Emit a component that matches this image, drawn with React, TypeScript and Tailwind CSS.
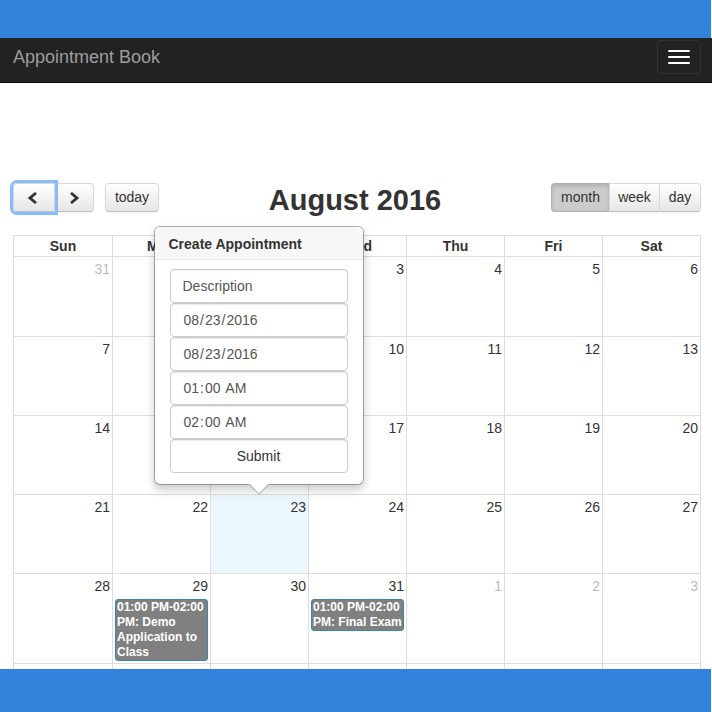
import React from "react";

type Day = { n: number; other?: boolean; event?: string; popover?: boolean };

const dayNames = ["Sun", "Mon", "Tue", "Wed", "Thu", "Fri", "Sat"];

const weeks: Day[][] = [
  [{ n: 31, other: true }, { n: 1 }, { n: 2 }, { n: 3 }, { n: 4 }, { n: 5 }, { n: 6 }],
  [7, 8, 9, 10, 11, 12, 13].map((n) => ({ n })),
  [14, 15, 16, 17, 18, 19, 20].map((n) => ({ n })),
  [{ n: 21 }, { n: 22 }, { n: 23, popover: true }, { n: 24 }, { n: 25 }, { n: 26 }, { n: 27 }],
  [
    { n: 28 },
    { n: 29, event: "01:00 PM-02:00 PM: Demo Application to Class" },
    { n: 30 },
    { n: 31, event: "01:00 PM-02:00 PM: Final Exam" },
    { n: 1, other: true },
    { n: 2, other: true },
    { n: 3, other: true },
  ],
];

const fields = [
  { label: "Start date", type: "date", value: "2016-08-23" },
  { label: "End date", type: "date", value: "2016-08-23" },
  { label: "Start time", type: "time", value: "01:00" },
  { label: "End time", type: "time", value: "02:00" },
];

const control =
  "block h-[34px] w-full rounded-[4px] border border-[#cccccc] bg-white text-[14px] shadow-[inset_0_1px_1px_rgba(0,0,0,0.075)]";

const toolButton =
  "flex h-[29px] items-center justify-center border border-[#d8d8d8] border-b-[#bfbfbf] bg-linear-to-b from-white to-[#e6e6e6] text-[14px] shadow-[0_1px_2px_rgba(0,0,0,0.05)]";

function CreatePopover() {
  return (
    <div
      role="dialog"
      aria-label="Create Appointment"
      className="absolute bottom-full left-1/2 z-10 mb-[10px] -ml-[106px] w-[210px] rounded-[6px] border border-black/30 bg-white bg-clip-padding text-left shadow-[0_5px_10px_rgba(0,0,0,0.2)]"
    >
      <h3 className="h-[33px] rounded-t-[5px] border-b border-[#ebebeb] bg-[#f7f7f7] px-[14px] text-[14px] leading-[35px] font-bold">
        Create Appointment
      </h3>
      <form className="px-[15px] pt-[9px] pb-[11px]" onSubmit={(e) => e.preventDefault()}>
        <input
          type="text"
          aria-label="Description"
          placeholder="Description"
          className={control + " px-3 placeholder:text-[#555555]"}
        />
        {fields.map((f) => (
          <input
            key={f.label}
            type={f.type}
            aria-label={f.label}
            defaultValue={f.value}
            className={control + " px-3 text-[#555555] [&::-webkit-calendar-picker-indicator]:hidden"}
          />
        ))}
        <button type="submit" className={control + " text-center"}>
          Submit
        </button>
      </form>
      <svg className="absolute top-full left-1/2 -translate-x-1/2" width="22" height="12" viewBox="0 0 22 12" aria-hidden="true">
        <path d="M0 0 L11 11 L22 0" fill="#b8b8b8" />
        <path d="M1 -1 L11 9.5 L21 -1 Z" fill="#ffffff" />
      </svg>
    </div>
  );
}

function DayCell({ day }: { day: Day }) {
  return (
    <td className={"border border-[#dddddd] p-0 align-top " + (day.popover ? "bg-[#ebf7fd]" : "")}>
      <div className="relative">
        {day.popover && <CreatePopover />}
        <div className={"px-[2px] pt-[2px] text-right text-[14px] leading-5 " + (day.other ? "text-[#bbbbbb]" : "")}>
          {day.n}
        </div>
        {day.event && (
          <a
            href="#event"
            className="mx-[2px] mt-[3px] mb-[2px] block rounded-[3px] border border-[#3a87ad] bg-[#808080] px-px text-[12px] leading-[15px] font-bold text-white"
          >
            {day.event}
          </a>
        )}
      </div>
    </td>
  );
}

export default function App() {
  return (
    <div className="flex min-h-screen flex-col bg-white font-['Liberation_Sans',Arial,sans-serif] text-[#333333]">
      <div className="mr-px h-[38px] bg-[#3182da]" />
      <nav className="flex h-[45px] items-start justify-between border-b border-[#080808] bg-[#222222] pr-[11px] pl-[13px]">
        <a href="#home" className="pt-[9px] text-[18px] leading-5 text-[#9d9d9d]">
          Appointment Book
        </a>
        <button
          type="button"
          aria-label="Toggle navigation"
          className="mt-[2px] flex h-[34px] w-[44px] flex-col items-center justify-center gap-1 rounded-[4px] border border-[#333333]"
        >
          <span className="h-[2px] w-[22px] rounded-[1px] bg-white" />
          <span className="h-[2px] w-[22px] rounded-[1px] bg-white" />
          <span className="h-[2px] w-[22px] rounded-[1px] bg-white" />
        </button>
      </nav>

      <main className="bg-white pr-[11px] pl-[13px]">
        <header className="flex items-start justify-between pt-[100px] pb-[18px]">
          <div className="flex">
            <button
              type="button"
              aria-label="Previous month"
              className={toolButton + " relative z-10 w-[42px] rounded-l-[4px] ring-3 ring-[#86bcfb]"}
            >
              <svg width="12" height="12" viewBox="0 0 12 12" fill="none" stroke="#333333" strokeWidth="2.8" aria-hidden="true">
                <path d="M8 1 L2 6 L8 11" />
              </svg>
            </button>
            <button type="button" aria-label="Next month" className={toolButton + " w-[39px] rounded-r-[4px] border-l-0"}>
              <svg width="12" height="12" viewBox="0 0 12 12" fill="none" stroke="#333333" strokeWidth="2.8" aria-hidden="true">
                <path d="M3 1 L9 6 L3 11" />
              </svg>
            </button>
            <button type="button" className={toolButton + " ml-[11px] w-[54px] rounded-[4px]"}>
              today
            </button>
          </div>
          <h2 className="text-[29px] leading-[34px] font-bold">August 2016</h2>
          <div className="flex justify-end">
            <button
              type="button"
              aria-pressed="true"
              className="flex h-[29px] w-[58px] items-center justify-center rounded-l-[4px] border border-r-0 border-[#b0b0b0] bg-[#cccccc] text-[14px] shadow-[inset_0_2px_4px_rgba(0,0,0,0.15)]"
            >
              month
            </button>
            <button type="button" className={toolButton + " w-[50px] border-r-0"}>
              week
            </button>
            <button type="button" className={toolButton + " w-[42px] rounded-r-[4px]"}>
              day
            </button>
          </div>
        </header>

        <table className="w-full table-fixed border-collapse">
          <thead>
            <tr className="h-[21px]">
              {dayNames.map((d) => (
                <th
                  key={d}
                  className="border border-[#dddddd] p-0 text-[14px] leading-5 font-bold first:w-[99px]"
                >
                  {d}
                </th>
              ))}
            </tr>
          </thead>
          <tbody>
            {weeks.map((week, i) => (
              <tr key={i} className={i === 0 ? "h-[80px]" : "h-[79px]"}>
                {week.map((day, j) => (
                  <DayCell key={j} day={day} />
                ))}
              </tr>
            ))}
            <tr className="h-[5px]">
              {dayNames.map((d) => (
                <td key={d} className="border border-b-0 border-[#dddddd] p-0" />
              ))}
            </tr>
          </tbody>
        </table>
      </main>
      <div className="mr-px min-h-[38px] grow bg-[#3182da]" />
    </div>
  );
}
